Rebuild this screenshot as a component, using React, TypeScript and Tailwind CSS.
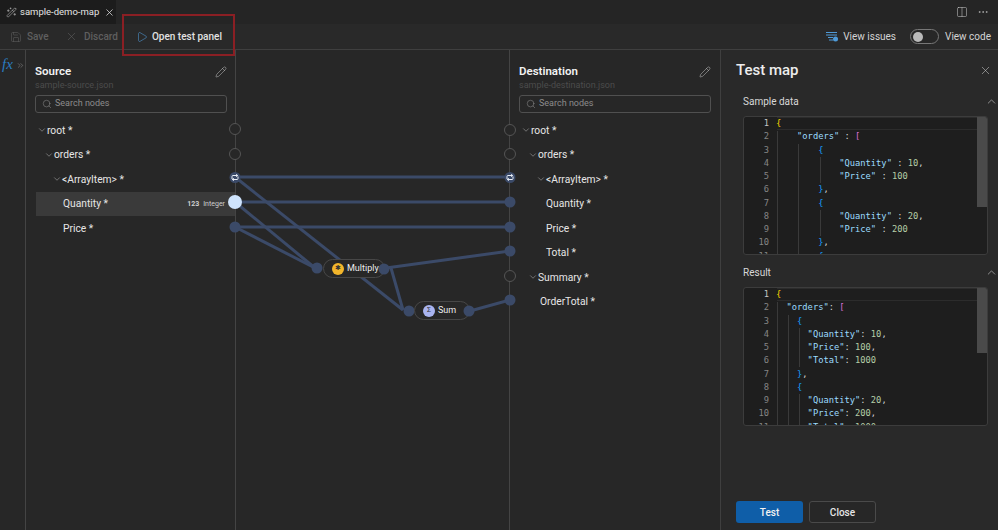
import { ChevronDown, ChevronUp, ChevronsRight, Columns2, MoreHorizontal, Pencil, Play, Save, Search, Wand2, X } from "lucide-react";

type Token = [string, string];

const KEY = "text-[#9cdcfe]";
const NUM = "text-[#b5cea8]";
const TXT = "text-[#d4d4d4]";
const GOLD = "text-[#ffd700]";
const PINK = "text-[#da70d6]";
const BLUE = "text-[#179fff]";

const sampleLines: Token[][] = [
  [["{", GOLD]],
  [["    ", TXT], ['"orders"', KEY], [" : ", TXT], ["[", PINK]],
  [["        ", TXT], ["{", BLUE]],
  [["            ", TXT], ['"Quantity"', KEY], [" : ", TXT], ["10", NUM], [",", TXT]],
  [["            ", TXT], ['"Price"', KEY], [" : ", TXT], ["100", NUM]],
  [["        ", TXT], ["}", BLUE], [",", TXT]],
  [["        ", TXT], ["{", BLUE]],
  [["            ", TXT], ['"Quantity"', KEY], [" : ", TXT], ["20", NUM], [",", TXT]],
  [["            ", TXT], ['"Price"', KEY], [" : ", TXT], ["200", NUM]],
  [["        ", TXT], ["}", BLUE], [",", TXT]],
  [["        ", TXT], ["{", BLUE]],
];

const resultLines: Token[][] = [
  [["{", GOLD]],
  [["  ", TXT], ['"orders"', KEY], [": ", TXT], ["[", PINK]],
  [["    ", TXT], ["{", BLUE]],
  [["      ", TXT], ['"Quantity"', KEY], [": ", TXT], ["10", NUM], [",", TXT]],
  [["      ", TXT], ['"Price"', KEY], [": ", TXT], ["100", NUM], [",", TXT]],
  [["      ", TXT], ['"Total"', KEY], [": ", TXT], ["1000", NUM]],
  [["    ", TXT], ["}", BLUE], [",", TXT]],
  [["    ", TXT], ["{", BLUE]],
  [["      ", TXT], ['"Quantity"', KEY], [": ", TXT], ["20", NUM], [",", TXT]],
  [["      ", TXT], ['"Price"', KEY], [": ", TXT], ["200", NUM], [",", TXT]],
  [["      ", TXT], ['"Total"', KEY], [": ", TXT], ["1000", NUM]],
];

// indent guides, each one is [left, top, height] inside the editor box
const sampleGuides = [
  [33, 14, 125],
  [54, 27, 125],
  [76, 40, 26],
  [76, 93, 26],
];

const resultGuides = [
  [33, 14, 125],
  [44, 27, 125],
  [55, 40, 39],
  [55, 106, 33],
];

const CodeBox = ({ lines, thumb, guides }: { lines: Token[][]; thumb: string; guides: number[][] }) => {
  return (
    <div className="relative h-[139px] overflow-hidden rounded-[3px] border border-[#3c3c3c] bg-[#1e1e1e] font-['DejaVu_Sans_Mono',monospace] text-[8.75px] leading-[13.25px]">
      <div className="flex">
        <div className="w-[25px] shrink-0 text-right text-[#858585]">
          {lines.map((_, i) => (
            <div key={i} className={i === 0 ? "text-[#c6c6c6]" : ""}>
              {i + 1}
            </div>
          ))}
        </div>
        <div className="ml-[7px] flex-1 whitespace-pre">
          {lines.map((line, i) => (
            <div key={i}>
              {line.map(([text, color], j) => (
                <span key={j} className={color}>
                  {text}
                </span>
              ))}
            </div>
          ))}
        </div>
      </div>
      <div className="absolute left-[33px] right-0 top-0 h-[13px] border-y border-[#2c2c2c]"></div>
      {guides.map(([left, top, height]) => (
        <div
          key={`${left}-${top}`}
          className="absolute w-px bg-[#3a3a3a]"
          style={{ left, top, height }}
        ></div>
      ))}
      <div className={`absolute right-0 top-0 w-[10px] bg-[#4a4a4a] ${thumb}`}></div>
    </div>
  );
};

const Row = ({
  label,
  indent,
  chevron,
  active,
}: {
  label: string;
  indent: string;
  chevron?: boolean;
  active?: boolean;
}) => {
  return (
    <div className={`flex h-[24.5px] items-center text-[10.25px] text-[#e6e6e6] ${active ? "bg-[#3a3a3a]" : ""}`}>
      <div className={`flex items-center ${indent}`}>
        {chevron && <ChevronDown size={10} strokeWidth={1.2} className="text-[#bdbdbd]" />}
        <span>{label}</span>
      </div>
      {active && (
        <span className="ml-auto mr-[10px] flex items-center gap-[4px] text-[7px] text-[#cfcfcf]">
          <b className="text-[7px]">123</b> Integer
        </span>
      )}
    </div>
  );
};

const PanelHead = ({ title, file }: { title: string; file: string }) => {
  return (
    <div>
      <div className="flex h-[20px] items-center justify-between pr-[0px] pt-[1px]">
        <span className="text-[11.5px] font-semibold text-[#f2f2f2]">{title}</span>
        <Pencil size={12} strokeWidth={1} className="text-[#c8c8c8]" />
      </div>
      <div className="h-[13px] text-[9px] leading-[9px] text-[#4c4c4c]">{file}</div>
      <div className="mt-[1px] flex h-[18px] items-center gap-[3px] rounded-[3px] border border-[#505050] pl-[6px] text-[9px] text-[#8c8c8c]">
        <Search size={10} strokeWidth={1.3} />
        <span>Search nodes</span>
      </div>
    </div>
  );
};

const LoopIcon = ({ x, y }: { x: number; y: number }) => (
  <g transform={`translate(${x} ${y})`} fill="none" stroke="#e8edf5" strokeWidth="1">
    <path d="M-3 1.5 V-1 Q-3 -2 -2 -2 H2.5 M1.2 -3.2 L2.7 -2 L1.2 -0.8" />
    <path d="M3 -1 V1 Q3 2 2 2 H-2.5 M-1.2 0.8 L-2.7 2 L-1.2 3.2" />
  </g>
);

const LINK = "#3b4a68";

const Connections = () => {
  return (
    <svg className="absolute inset-0 h-full w-full" viewBox="26 50 694 480">
      <g stroke={LINK} strokeWidth="3" fill="none">
        <path d="M235 177 H510" />
        <path d="M235 202 H510" />
        <path d="M235 227 H510" />
        <path d="M235 177 L403 310" />
        <path d="M235 202 L315 268" />
        <path d="M235 227 L315 268" />
        <path d="M386 268 L510 251" />
        <path d="M391 268 L403 310" />
        <path d="M470 311 L510 300" />
      </g>
      <g fill="#272727" stroke="#555555" strokeWidth="1">
        <circle cx="235" cy="129" r="5.5" />
        <circle cx="235" cy="154" r="5.5" />
        <circle cx="510" cy="130" r="5.5" />
        <circle cx="510" cy="154" r="5.5" />
        <circle cx="510" cy="276" r="5.5" />
      </g>
      <g fill={LINK}>
        <circle cx="235" cy="177.5" r="5.5" />
        <circle cx="235" cy="227" r="5.5" />
        <circle cx="510" cy="177.5" r="5.5" />
        <circle cx="510" cy="202" r="5.5" />
        <circle cx="510" cy="227" r="5.5" />
        <circle cx="510" cy="251" r="5.5" />
        <circle cx="510" cy="300" r="5.5" />
        <circle cx="317" cy="268" r="5.5" />
        <circle cx="409" cy="311" r="5.5" />
      </g>
      <circle cx="235" cy="202" r="7" fill="#cfe4fd" />
      <LoopIcon x={235} y={177.5} />
      <LoopIcon x={510} y={177.5} />
    </svg>
  );
};

const FnNode = ({
  label,
  pos,
  icon,
  symbol,
}: {
  label: string;
  pos: string;
  icon: string;
  symbol: string;
}) => {
  return (
    <div className={`absolute flex h-[19px] items-center rounded-full border border-[#474747] bg-[#272727] pl-[8px] text-[9px] text-[#ececec] ${pos}`}>
      <span className={`mr-[3px] flex h-[12px] w-[12px] items-center justify-center rounded-full text-[7px] text-[#333] ${icon}`}>
        {symbol}
      </span>
      {label}
      <svg className="absolute -right-[6px] top-[3px] h-[12px] w-[12px]" viewBox="0 0 12 12">
        <circle cx="6" cy="6" r="5.5" fill={LINK} />
      </svg>
    </div>
  );
};

const Section = ({
  title,
  lines,
  thumb,
  guides,
}: {
  title: string;
  lines: Token[][];
  thumb: string;
  guides: number[][];
}) => {
  return (
    <div>
      <div className="flex h-[27px] items-center justify-between pb-[2px] pl-[22px] pr-0 text-[10px] text-[#d8d8d8]">
        <span>{title}</span>
        <ChevronUp size={13} strokeWidth={1.1} className="text-[#cfcfcf]" />
      </div>
      <div className="pl-[22px] pr-[10px]">
        <CodeBox lines={lines} thumb={thumb} guides={guides} />
      </div>
    </div>
  );
};

export default function App() {
  return (
    <div className="relative flex h-[530px] w-[998px] flex-col overflow-hidden bg-[#272727] font-['Roboto',sans-serif]">
      <div className="flex h-[24px] items-stretch bg-[#252525]">
        <div className="flex w-[116px] items-center whitespace-nowrap bg-[#1c1c1c] pl-[6px] text-[9.5px] text-[#e4e4e4]">
          <Wand2 size={11} strokeWidth={1.2} className="mr-[3px] text-[#c8c8c8]" />
          <span>sample-demo-map</span>
          <X size={11} strokeWidth={1.6} className="ml-[5px]" />
        </div>
        <div className="ml-auto flex items-center gap-[9px] pr-[9px] text-[#c8c8c8]">
          <Columns2 size={12} strokeWidth={1.1} />
          <MoreHorizontal size={12} strokeWidth={1.2} />
        </div>
      </div>

      <div className="flex h-[26px] items-center border-b border-[#3f3f3f] bg-[#292929] pl-[10px] text-[10px]">
        <div className="flex items-center gap-[5px] text-[#5f5f5f]">
          <Save size={12} strokeWidth={1.1} />
          <span className="w-[38px] font-medium">Save</span>
        </div>
        <div className="flex items-center gap-[6px] text-[#5f5f5f]">
          <X size={13} strokeWidth={1.1} />
          <span className="font-medium">Discard</span>
        </div>
        <div className="ml-[18px] flex items-center gap-[4px] font-medium text-[#e2e2e2]">
          <Play size={12} strokeWidth={1.1} className="text-[#4f9bd9]" />
          <span>Open test panel</span>
        </div>
        <div className="ml-auto flex items-center pr-[7px] text-[#d4d4d4]">
          <svg className="mr-[5px] h-[11px] w-[12px]" viewBox="0 0 12 11" fill="none">
            <path d="M0 1.5 H11 M0 4 H11 M2 6.5 H7 M3 9 H7" stroke="#4f9bd9" strokeWidth="1" />
            <circle cx="9.5" cy="8" r="2.5" fill="#4f9bd9" />
          </svg>
          <span>View issues</span>
          <div className="ml-[14px] mr-[6px] flex h-[15px] w-[29px] items-center rounded-full border border-[#777777] bg-[#272727] pl-[2px]">
            <div className="h-[10px] w-[10px] rounded-full bg-[#b9b9b9]"></div>
          </div>
          <span>View code</span>
        </div>
      </div>

      <div className="flex min-h-0 flex-1">
        <div className="flex w-[26px] shrink-0 items-start border-r border-[#444444] pt-[7px] text-[#2b7cc0]">
          <span className="mr-[3px] pl-[2px] font-['Liberation_Serif',serif] text-[15px] italic leading-[15px]">fx</span>
          <ChevronsRight size={9} strokeWidth={1.2} className="mt-[4px] text-[#a0a0a0]" />
        </div>

        <div className="relative flex flex-1">
          <div className="w-[209px] pl-[9px] pt-[11px]">
            <div className="pr-[8px]">
              <PanelHead title="Source" file="sample-source.json" />
            </div>
            <div className="mt-[5px]">
              <Row label="root *" indent="pl-[2px]" chevron />
              <Row label="orders *" indent="pl-[9px]" chevron />
              <Row label="<ArrayItem> *" indent="pl-[17px]" chevron />
              <div className="ml-px">
                <Row label="Quantity *" indent="pl-[27px]" active />
              </div>
              <Row label="Price *" indent="pl-[28px]" />
            </div>
          </div>
          <div className="w-[275px] border-x border-[#444444]"></div>
          <div className="flex-1 pl-[9px] pr-[9px] pt-[11px]">
            <PanelHead title="Destination" file="sample-destination.json" />
            <div className="mt-[5px]">
              <Row label="root *" indent="pl-[2px]" chevron />
              <Row label="orders *" indent="pl-[9px]" chevron />
              <Row label="<ArrayItem> *" indent="pl-[17px]" chevron />
              <Row label="Quantity *" indent="pl-[27px]" />
              <Row label="Price *" indent="pl-[27px]" />
              <Row label="Total *" indent="pl-[27px]" />
              <Row label="Summary *" indent="pl-[9px]" chevron />
              <Row label="OrderTotal *" indent="pl-[21px]" />
            </div>
          </div>
          <Connections />
          <FnNode label="Multiply" pos="left-[297px] top-[209px] w-[62px]" icon="bg-[#f2b52b]" symbol="✱" />
          <FnNode label="Sum" pos="left-[388px] top-[251px] w-[56px]" icon="bg-[#a9b4f0]" symbol="Σ" />
        </div>

        <div className="flex w-[278px] shrink-0 flex-col border-l border-[#3f3f3f] bg-[#292929]">
          <div className="flex h-[39px] items-center justify-between pl-[15px] pr-[6px] pt-[1px]">
            <span className="text-[15px] font-medium text-[#ededed]">Test map</span>
            <X size={13} strokeWidth={1} className="text-[#cfcfcf]" />
          </div>
          <div>
            <Section title="Sample data" lines={sampleLines} thumb="h-[90px]" guides={sampleGuides} />
            <div className="h-[5px]"></div>
            <Section title="Result" lines={resultLines} thumb="h-[65px]" guides={resultGuides} />
          </div>
          <div className="mt-auto flex gap-[6px] pb-[7px] pl-[15px] text-[10px] font-medium">
            <button className="h-[22px] w-[67px] rounded-[3px] bg-[#0f5ea8] text-[#f2f2f2]">Test</button>
            <button className="h-[22px] w-[67px] rounded-[3px] border border-[#4a4a4a] bg-[#272727] text-[#e6e6e6]">Close</button>
          </div>
        </div>
      </div>

      <div className="absolute left-[122px] top-[14px] h-[42px] w-[113px] border-2 border-[#8b1f24]"></div>
    </div>
  );
}
